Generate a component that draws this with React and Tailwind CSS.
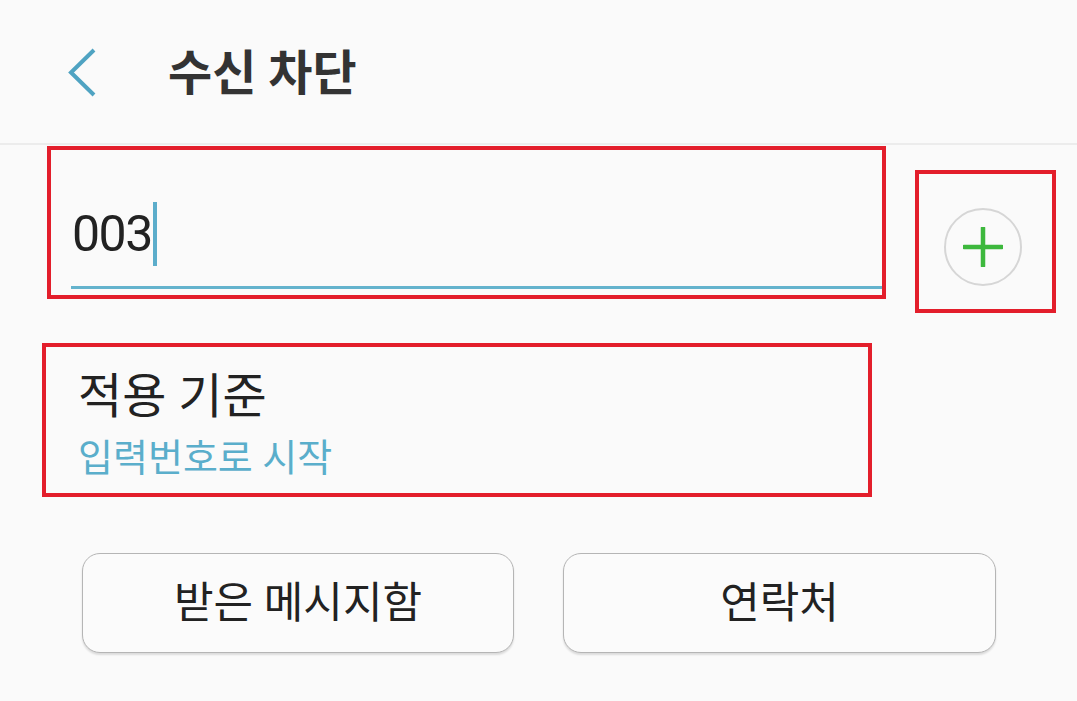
import React from "react";

export default function App() {
  const font = { fontFamily: "Roboto, 'Noto Sans CJK KR', sans-serif" };
  return (
    <div className="relative w-[1077px] h-[701px] overflow-hidden bg-[#fafafa]" style={font}>
      {/* Header */}
      <div className="h-[145px] flex items-center border-b-2 border-[#ececec]">
        <div className="w-[168px] flex items-center pl-[66px] pt-[2px]">
          <svg width="32" height="50" viewBox="0 0 32 50">
            <path d="M28 2 L5 24.5 L28 47" fill="none" stroke="#4fa3c2" strokeWidth="4" />
          </svg>
        </div>
        <div className="text-[48px] font-bold text-[#333] leading-none pt-[5px]">수신 차단</div>
      </div>

      {/* Input row */}
      <div className="flex items-start pt-[55px]">
        <div className="ml-[71px] w-[812px] flex flex-col">
          <div className="flex items-center h-[68px] pl-[1px]">
            <span className="text-[50px] leading-none text-[#222] tracking-[-1.5px]">003</span>
            <span className="ml-[1px] w-[4px] h-[64px] bg-[#5cadcb]" />
          </div>
          <div className="mt-[18px] h-[3px] bg-[#64b3cd]" />
        </div>
        <div className="ml-[61px] mt-[8px] w-[78px] h-[78px] rounded-full border-2 border-[#d6d6d6] flex items-center justify-center">
          <svg width="40" height="40" viewBox="0 0 40 40">
            <path d="M20 1 V39 M1 20 H39" stroke="#3db83d" strokeWidth="4.5" strokeLinecap="round" />
          </svg>
        </div>
      </div>

      {/* Applied rule */}
      <div className="pl-[78px] pt-[84px] flex flex-col">
        <div className="text-[48px] leading-none text-[#222]">적용 기준</div>
        <div className="mt-[18px] text-[38px] leading-none text-[#5aaecb]">입력번호로 시작</div>
      </div>

      {/* Buttons */}
      <div className="flex gap-[49px] pl-[82px] pt-[76px]">
        <button className="w-[432px] h-[100px] rounded-[18px] border border-[#b5b5b5] bg-[#fbfbfb] shadow-[0_2px_2px_rgba(0,0,0,0.12)] text-[43px] text-[#222] flex items-center justify-center">
          받은 메시지함
        </button>
        <button className="w-[433px] h-[100px] rounded-[18px] border border-[#b5b5b5] bg-[#fbfbfb] shadow-[0_2px_2px_rgba(0,0,0,0.12)] text-[43px] text-[#222] flex items-center justify-center">
          연락처
        </button>
      </div>

      {/* Red annotation boxes */}
      <div className="absolute left-[47px] top-[146px] w-[839px] h-[153px] border-[4px] border-[#e31e2b]" />
      <div className="absolute left-[915px] top-[170px] w-[141px] h-[143px] border-[4px] border-[#e31e2b]" />
      <div className="absolute left-[42px] top-[343px] w-[830px] h-[154px] border-[4px] border-[#e31e2b]" />
    </div>
  );
}
